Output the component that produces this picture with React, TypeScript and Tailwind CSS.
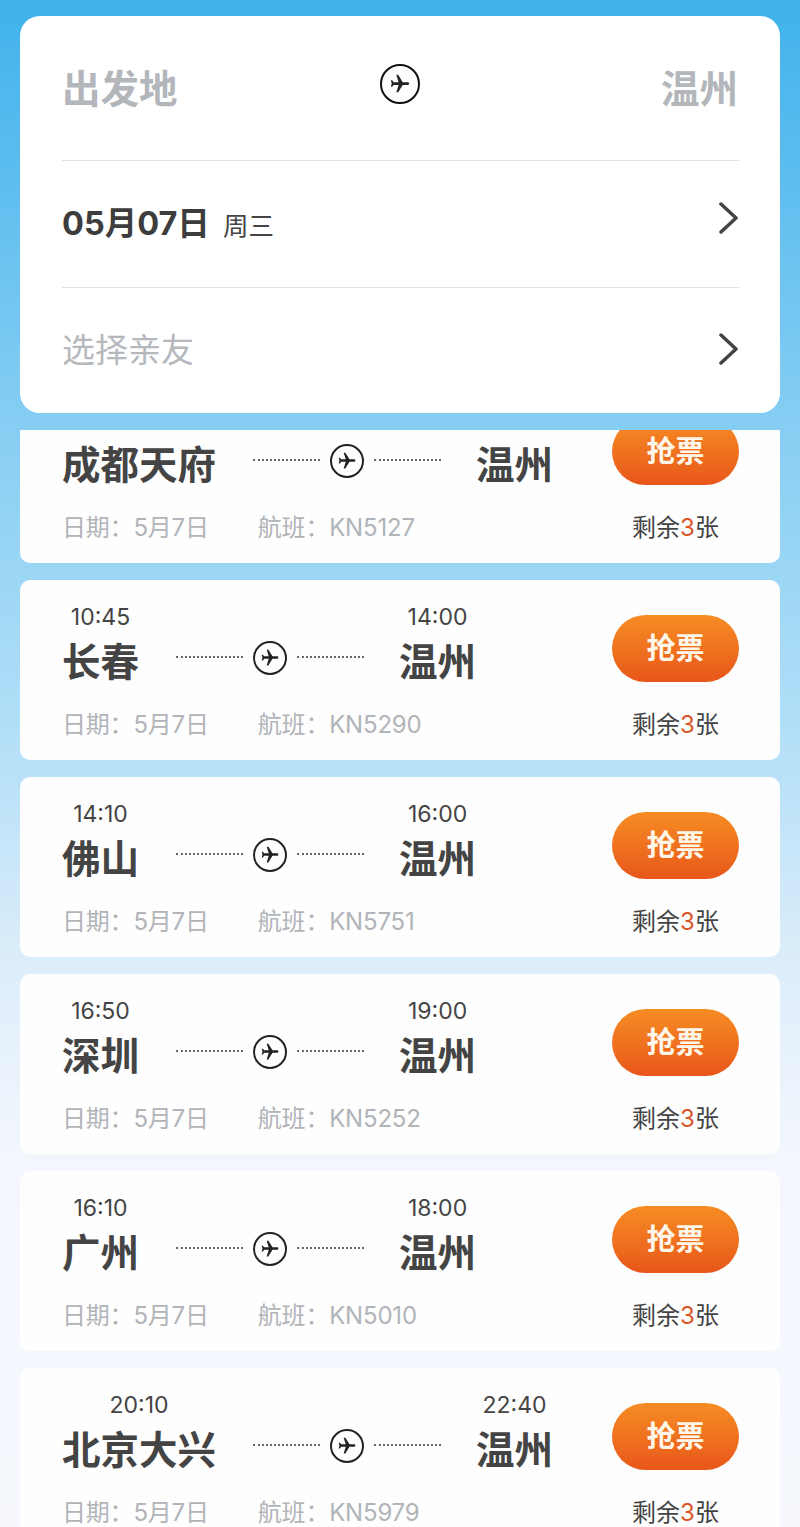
const fontClass = "font-['Inter','Noto_Sans_CJK_SC',sans-serif]";

const flights = [
  { from: '成都天府', depart: '', arrive: '', no: 'KN5127' },
  { from: '长春', depart: '10:45', arrive: '14:00', no: 'KN5290' },
  { from: '佛山', depart: '14:10', arrive: '16:00', no: 'KN5751' },
  { from: '深圳', depart: '16:50', arrive: '19:00', no: 'KN5252' },
  { from: '广州', depart: '16:10', arrive: '18:00', no: 'KN5010' },
  { from: '北京大兴', depart: '20:10', arrive: '22:40', no: 'KN5979' },
];

function PlaneBadge({ size }: { size: 'sm' | 'lg' }) {
  return (
    <div
      className={
        size === 'lg'
          ? 'flex h-[40px] w-[40px] items-center justify-center rounded-full border-2 border-[#111]'
          : 'flex h-[34px] w-[34px] items-center justify-center rounded-full border-2 border-[#222]'
      }
    >
      <svg viewBox="0 0 24 24" className={size === 'lg' ? 'h-[22px] w-[22px] rotate-90' : 'h-[20px] w-[20px] rotate-90'} fill="#222">
        <path d="M21 16v-2l-8-5V3.5c0-.83-.67-1.5-1.5-1.5S10 2.67 10 3.5V9l-8 5v2l8-2.5V19l-2 1.5V22l3.5-1 3.5 1v-1.5L13 19v-5.5l8 2.5z" />
      </svg>
    </div>
  );
}

function Chevron() {
  return (
    <svg viewBox="0 0 20 32" className="mr-[1px] h-[32px] w-[20px]" fill="none" stroke="#444" strokeWidth="3.5" strokeLinecap="round" strokeLinejoin="round">
      <path d="M3 2l15 14L3 30" />
    </svg>
  );
}

function CityColumn({ time, city }: { time: string; city: string }) {
  return (
    <div className="flex flex-col items-center">
      <div className="h-[28px] text-[23px] leading-[28px] text-[#444]">{time}</div>
      <div className="mt-[8px] text-[38.5px] leading-[46px] font-bold text-[#444]">{city}</div>
    </div>
  );
}

function FlightCard({ from, depart, arrive, no }: (typeof flights)[number]) {
  return (
    <div className="h-[180px] shrink-0 rounded-[10px] bg-[#fefefe] pt-[23px] pr-[41px] pl-[42px]">
      <div className="flex items-start justify-between">
        <div className="flex">
          <CityColumn time={depart} city={from} />
          <div className="ml-[37px] flex h-[82px] items-end">
            <div className="flex h-[46px] items-center gap-[10px] pb-[8px]">
              <div className="mb-[2px] w-[67px] border-t-2 border-dotted border-[#666]" />
              <PlaneBadge size="sm" />
              <div className="mb-[2px] w-[67px] border-t-2 border-dotted border-[#666]" />
            </div>
          </div>
          <div className="ml-[35px]">
            <CityColumn time={arrive} city="温州" />
          </div>
        </div>
        <button className="mt-[12px] h-[67px] w-[127px] rounded-full bg-gradient-to-b from-[#f68c24] to-[#e8561a] text-[29px] leading-[60px] font-bold text-[#fff6ea]">
          抢票
        </button>
      </div>
      <div className="mt-[24px] flex items-center justify-between text-[24px] leading-[32px]">
        <div className="flex gap-[49px] tracking-[-0.2px] text-[#b1b4b8]">
          <span>日期：5月7日</span>
          <span>航班：{no}</span>
        </div>
        <div className="w-[127px] text-center text-[#444]">
          剩余<span className="text-[#d9572a]">3</span>张
        </div>
      </div>
    </div>
  );
}

export default function App() {
  return (
    <div className={`${fontClass} h-[1527px] w-[800px] overflow-hidden bg-[linear-gradient(180deg,#40b2ec_0px,#87cef3_430px,#b8e1f8_770px,#dcedfa_960px,#f3f6fd_1150px,#f6f8fe_1527px)] px-[20px] pt-[16px]`}>
      <div className="h-[397px] rounded-[20px] bg-white pr-[41px] pl-[42px]">
        <div className="grid h-[145px] grid-cols-3 items-start border-b border-[#dfe1e4]">
          <div className="mt-[50px] text-[38.5px] leading-[46px] font-bold text-[#b3b7bb]">出发地</div>
          <div className="mt-[48px] justify-self-center">
            <PlaneBadge size="lg" />
          </div>
          <div className="mt-[50px] mr-[1px] justify-self-end text-[38.5px] leading-[46px] font-bold text-[#b3b7bb]">温州</div>
        </div>
        <div className="flex h-[127px] items-center justify-between border-b border-[#dfe1e4]">
          <div className="flex items-baseline gap-[13px] pt-[1px] text-[#3d3d3d]">
            <span className="text-[32.5px] font-bold">05月07日</span>
            <span className="text-[25.5px] text-[#444]">周三</span>
          </div>
          <div className="mb-[12px]">
            <Chevron />
          </div>
        </div>
        <div className="flex h-[125px] items-center justify-between">
          <span className="text-[33px] text-[#b5b8bc]">选择亲友</span>
          <div className="mb-[3px]">
            <Chevron />
          </div>
        </div>
      </div>
      <div className="mt-[17px] h-[1100px] overflow-hidden">
        <div className="-mt-[47px] flex flex-col gap-[17px]">
          {flights.map((f) => (
            <FlightCard key={f.no} {...f} />
          ))}
        </div>
      </div>
    </div>
  );
}
